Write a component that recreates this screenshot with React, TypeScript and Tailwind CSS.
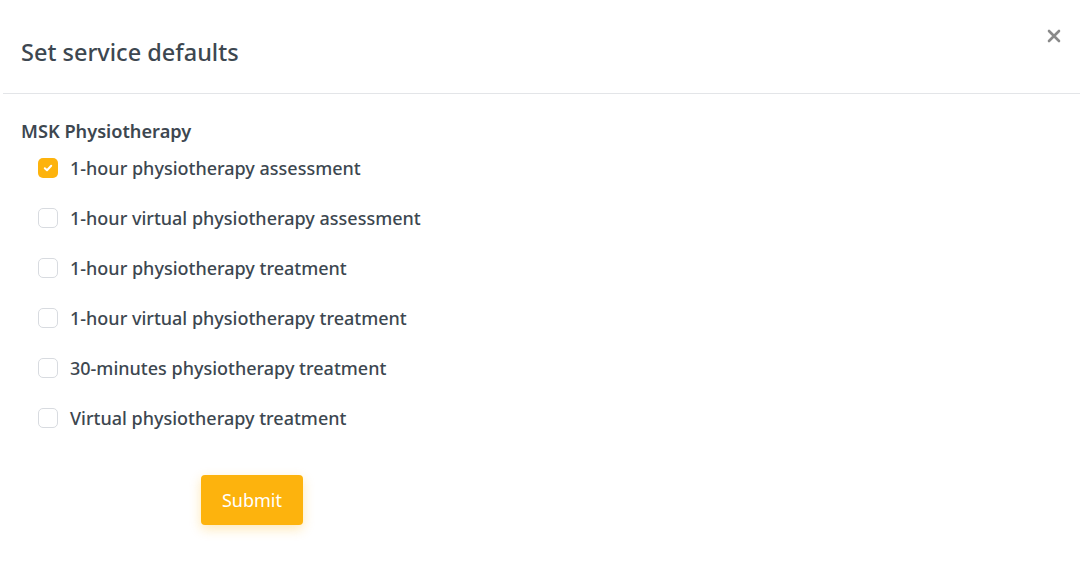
import React, { useState } from 'react';

const services = [
  '1-hour physiotherapy assessment',
  '1-hour virtual physiotherapy assessment',
  '1-hour physiotherapy treatment',
  '1-hour virtual physiotherapy treatment',
  '30-minutes physiotherapy treatment',
  'Virtual physiotherapy treatment',
];

const App: React.FC = () => {
  const [checked, setChecked] = useState<boolean[]>([true, false, false, false, false, false]);

  const toggle = (i: number) => {
    setChecked((prev) => prev.map((v, idx) => (idx === i ? !v : v)));
  };

  return (
    <div className="w-[1080px] h-[565px] bg-white text-[#3d4750] font-['Noto_Sans','Open_Sans',sans-serif] relative overflow-hidden">
      {/* Header */}
      <div className="h-[94px] ml-[3px] border-b border-[#e3e5e8] flex items-start">
        <h2 className="pl-[18px] pt-[36px] text-[23.5px] leading-[32px] font-medium">
          Set service defaults
        </h2>
      </div>
      <button className="absolute right-[19px] top-[29px] text-[#8a8a8a]" aria-label="Close">
        <svg width="14" height="14" viewBox="0 0 14 14">
          <path d="M2 2 L12 12 M12 2 L2 12" stroke="currentColor" strokeWidth="2.6" strokeLinecap="round" />
        </svg>
      </button>

      {/* Body */}
      <div className="pl-[21px] pt-[25px]">
        <h3 className="text-[18.2px] leading-[24px] font-semibold">MSK Physiotherapy</h3>
        <div className="flex flex-col">
          {services.map((s, i) => (
            <label key={s} className="h-[50px] flex items-center pl-[17px] cursor-pointer">
              <span
                onClick={() => toggle(i)}
                className={
                  checked[i]
                    ? 'w-[20px] h-[20px] rounded-[5px] bg-[#fdb30d] flex items-center justify-center'
                    : 'w-[20px] h-[20px] rounded-[5px] bg-white border border-[#d8dbe0]'
                }
              >
                {checked[i] && (
                  <svg width="10" height="10" viewBox="0 0 10 10">
                    <path d="M1.8 5.2 L4 7.3 L8.2 2.8" fill="none" stroke="white" strokeWidth="2" strokeLinecap="round" strokeLinejoin="round" />
                  </svg>
                )}
              </span>
              <span className="ml-[12px] text-[18px] font-medium">{s}</span>
            </label>
          ))}
        </div>
        <div className="mt-[32px] pl-[180px]">
          <button className="w-[102px] h-[50px] rounded-[4px] bg-[#fdb30d] text-white text-[18px] font-normal shadow-[0_4px_12px_rgba(253,179,13,0.3)]">
            Submit
          </button>
        </div>
      </div>
    </div>
  );
};

export default App;
